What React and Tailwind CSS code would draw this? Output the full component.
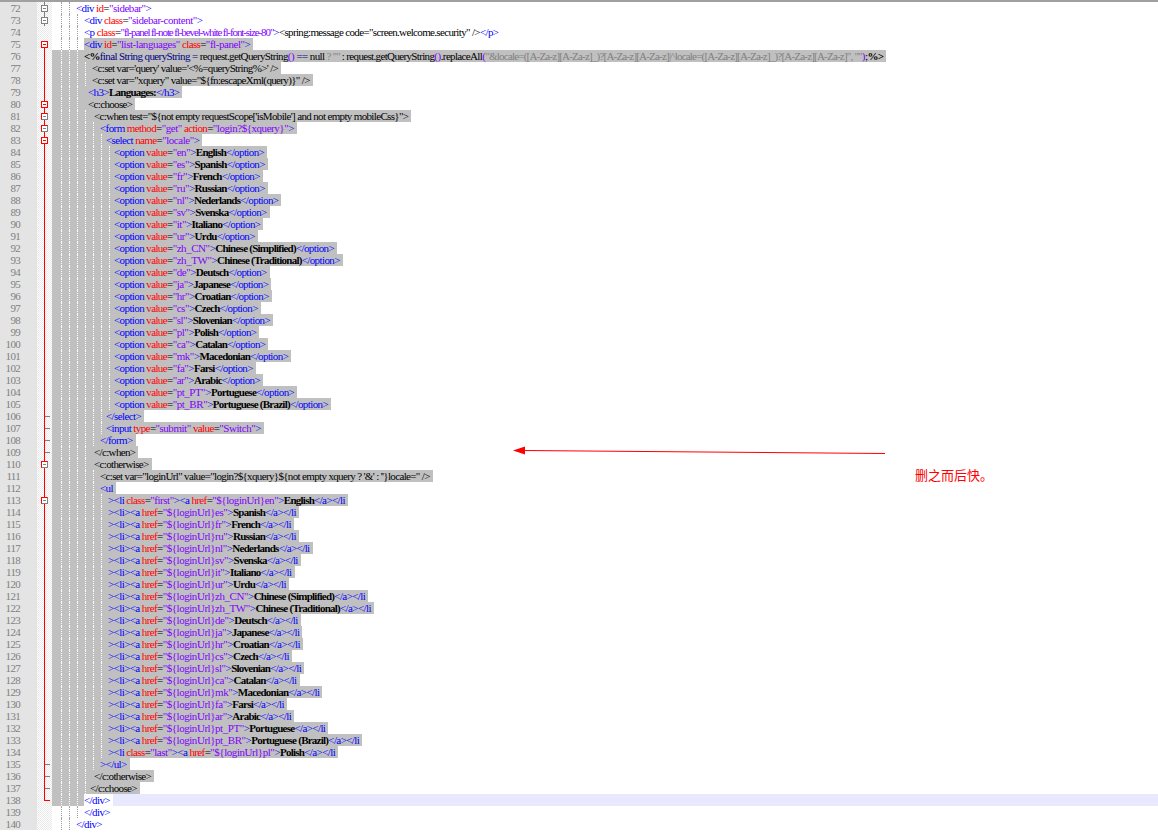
const SERIF = "font-['Liberation_Serif','Times_New_Roman',serif]";

// tokens: <tag blue, attr red, "string" purple, inner text bold
function html(src) {
  const parts = src.split(/(<\/?[a-zA-Z0-9]+|\/?>|"[^"]*"|[a-zA-Z-]+(?==)|=)/).filter(Boolean);
  return parts.map((p) => {
    if (/^(<|\/?>)/.test(p)) return ["tag", p];
    if (p[0] === '"') return ["str", p];
    if (p === "=") return ["txt", p];
    if (/^[a-zA-Z-]+$/.test(p) && src.includes(p + "=")) return ["attr", p];
    if (!p.trim()) return ["txt", p];
    return ["bold", p];
  });
}
const plain = (s) => [["txt", s]];
const opt = (v, t) => html(`<option value="${v}">${t}</option>`);
const li = (v, t) => html(`><li><a href="\${loginUrl}${v}">${t}</a></li`);

const COLORS = {
  tag: "text-[#0000ff]",
  attr: "text-[#ff0000]",
  str: "text-[#8000ff] tracking-[-0.45px]",
  strTight: "text-[#8000ff] tracking-[-1.1px]",
  txt: "text-black tracking-[-0.65px]",
  bold: "font-bold text-black tracking-[-0.75px]",
  gray: "text-[#808080] tracking-[-0.8px]",
  navy: "text-[#000080]",
};

const QS = [
  ["bold", "<%"],
  ["navy", "final String queryString = "],
  ["txt", "request.getQueryString"],
  ["str", "()"],
  ["navy", " == "],
  ["txt", "null "],
  ["gray", '? "" '],
  ["txt", ": request.getQueryString"],
  ["str", "()"],
  ["txt", ".replaceAll"],
  ["str", "("],
  ["gray", '"&locale=([A-Za-z][A-Za-z]_)?[A-Za-z][A-Za-z]|^locale=([A-Za-z][A-Za-z]_)?[A-Za-z][A-Za-z]", ""'],
  ["str", ")"],
  ["txt", ";"],
  ["bold", "%>"],
];

const OPTIONS = [
  ["en", "English"], ["es", "Spanish"], ["fr", "French"], ["ru", "Russian"], ["nl", "Nederlands"],
  ["sv", "Svenska"], ["it", "Italiano"], ["ur", "Urdu"], ["zh_CN", "Chinese (Simplified)"],
  ["zh_TW", "Chinese (Traditional)"], ["de", "Deutsch"], ["ja", "Japanese"], ["hr", "Croatian"],
  ["cs", "Czech"], ["sl", "Slovenian"], ["pl", "Polish"], ["ca", "Catalan"], ["mk", "Macedonian"],
  ["fa", "Farsi"], ["ar", "Arabic"], ["pt_PT", "Portuguese"], ["pt_BR", "Portuguese (Brazil)"],
];
const LINKS = [
  ["es", "Spanish"], ["fr", "French"], ["ru", "Russian"], ["nl", "Nederlands"], ["sv", "Svenska"],
  ["it", "Italiano"], ["ur", "Urdu"], ["zh_CN", "Chinese (Simplified)"], ["zh_TW", "Chinese (Traditional)"],
  ["de", "Deutsch"], ["ja", "Japanese"], ["hr", "Croatian"], ["cs", "Czech"], ["sl", "Slovenian"],
  ["ca", "Catalan"], ["mk", "Macedonian"], ["fa", "Farsi"], ["ar", "Arabic"], ["pt_PT", "Portuguese"],
  ["pt_BR", "Portuguese (Brazil)"],
];

const ROWS = [
  [76, html('<div id="sidebar">')],
  [84, html('<div class="sidebar-content">')],
  [84, [
    ["tag", "<p"], ["txt", " "], ["attr", "class"], ["txt", "="],
    ["strTight", '"fl-panel fl-note fl-bevel-white fl-font-size-80"'],
    ["tag", ">"],
    ...plain('<spring:message code="screen.welcome.security" />'),
    ...html("</p>"),
  ]],
  [84, html('<div id="list-languages" class="fl-panel">')],
  [84, QS],
  [92, plain(`<c:set var='query' value='<%=queryString%>' />`)],
  [92, plain('<c:set var="xquery" value="${fn:escapeXml(query)}" />')],
  [88, html("<h3>Languages:</h3>")],
  [88, plain("<c:choose>")],
  [94, plain(`<c:when test="\${not empty requestScope['isMobile'] and not empty mobileCss}">`)],
  [100, html('<form method="get" action="login?${xquery}">')],
  [106, html('<select name="locale">')],
  ...OPTIONS.map(([v, t]) => [114, opt(v, t)]),
  [106, html("</select>")],
  [106, html('<input type="submit" value="Switch">')],
  [100, html("</form>")],
  [94, plain("</c:when>")],
  [94, plain("<c:otherwise>")],
  [100, plain(`<c:set var="loginUrl" value="login?\${xquery}\${not empty xquery ? '&' : ''}locale=" />`)],
  [100, html("<ul")],
  [108, html('><li class="first"><a href="${loginUrl}en">English</a></li')],
  ...LINKS.map(([v, t]) => [108, li(v, t)]),
  [108, html('><li class="last"><a href="${loginUrl}pl">Polish</a></li')],
  [100, html("></ul>")],
  [94, plain("</c:otherwise>")],
  [90, plain("</c:choose>")],
  [84, html("</div>")],
  [84, html("</div>")],
  [76, html("</div>")],
];

const FIRST = 72;
const FOLD_BOX = { 72: "gray", 73: "gray", 75: "red", 80: "red", 81: "mix", 82: "mix", 83: "red", 110: "mix", 113: "mix" };
const TICKS = [106, 107, 108, 109, 135, 136, 137];

function FoldCell({ n }) {
  const box = FOLD_BOX[n];
  return (
    <div className="relative flex h-3 w-[15px] shrink-0 justify-center bg-[repeating-conic-gradient(#e8e8e8_0_25%,#ffffff_0_50%)] bg-[length:2px_2px] pt-[3px]">
      {/* fold tree lines */}
      {(n === 72 || n === 73) && <span className="absolute left-[7px] top-0 h-3 w-px bg-[#808080]" />}
      {n > 75 && n < 138 && <span className="absolute left-[7px] top-0 h-3 w-px bg-[#ff0000]" />}
      {n === 75 && <span className="absolute left-[7px] top-[7px] h-[5px] w-px bg-[#ff0000]" />}
      {n === 138 && <span className="absolute left-[7px] top-0 h-[7px] w-[6px] border-b border-l border-[#ff0000]" />}
      {TICKS.includes(n) && <span className="absolute left-[8px] top-[6px] h-px w-[5px] bg-[#808080]" />}
      {box && (
        <span
          className={`relative flex h-[7px] w-[7px] items-center justify-center border bg-white ${
            box === "gray" ? "border-[#808080]" : box === "red" ? "border-[#ff0000]" : "border-[#808080] border-t-[#ff0000] border-l-[#ff0000]"
          }`}
        >
          <span className={`h-px w-[3px] ${box === "red" ? "bg-[#ff0000]" : "bg-[#808080]"}`} />
        </span>
      )}
    </div>
  );
}

function Row({ n, x, segs }) {
  const guides = [];
  for (let g = 61; g < x - 3; g += 8) guides.push(g);
  const active = n === 138;
  const selBar = n >= 75 && n <= 137;
  const gutterGray = n >= 76 && n <= 138;

  return (
    <div className={`flex h-3 ${active ? "bg-[#e8e8ff]" : "bg-white"}`}>
      <div className="h-3 w-[37px] shrink-0 bg-[#e4e4e4] pr-[17px] text-right text-[11px] leading-3 tracking-[-0.7px] text-[#808080]">{n}</div>
      <FoldCell n={n} />
      <div className="relative flex h-3 min-w-0 flex-1">
        <div className={`h-3 shrink-0 ${gutterGray ? "bg-[#c0c0c0]" : "bg-white"}`} style={{ width: x - 52 }} />
        {guides.map((g) => (
          <span
            key={g}
            className={`absolute top-0 h-3 border-l border-dotted ${gutterGray ? "border-white" : "border-[#a0a0a0]"}`}
            style={{ left: g - 52 }}
          />
        ))}
        <div className={`h-3 shrink-0 whitespace-pre pr-[3px] text-[11px] leading-3 tracking-[-0.6px] ${selBar ? "bg-[#c0c0c0]" : active ? "bg-white" : "bg-white"}`}>
          {segs.map(([kind, text], i) => (
            <span key={i} className={COLORS[kind]}>{text}</span>
          ))}
        </div>
      </div>
    </div>
  );
}

function Callout() {
  return (
    <div className="pointer-events-none absolute left-[512px] top-[445px]">
      <svg width="376" height="14" viewBox="0 0 376 14" className="block">
        <line x1="12" y1="5.5" x2="373" y2="8.5" stroke="#ff0000" strokeWidth="1" />
        <polygon points="1,5.5 13,1.5 13,9.5" fill="#ff0000" />
      </svg>
      <p className="ml-[403px] mt-[8px] whitespace-nowrap font-['Noto_Sans_CJK_SC',sans-serif] text-[13px] leading-4 text-[#ff0000]">
        删之而后快。
      </p>
    </div>
  );
}

export default function App() {
  return (
    <div className={`relative h-[833px] w-[1158px] overflow-hidden bg-white ${SERIF}`}>
      <div className="h-0.5 bg-[#a0a0a0]" />
      {ROWS.map(([x, segs], i) => (
        <Row key={i} n={FIRST + i} x={x} segs={segs} />
      ))}
      <Callout />
    </div>
  );
}
